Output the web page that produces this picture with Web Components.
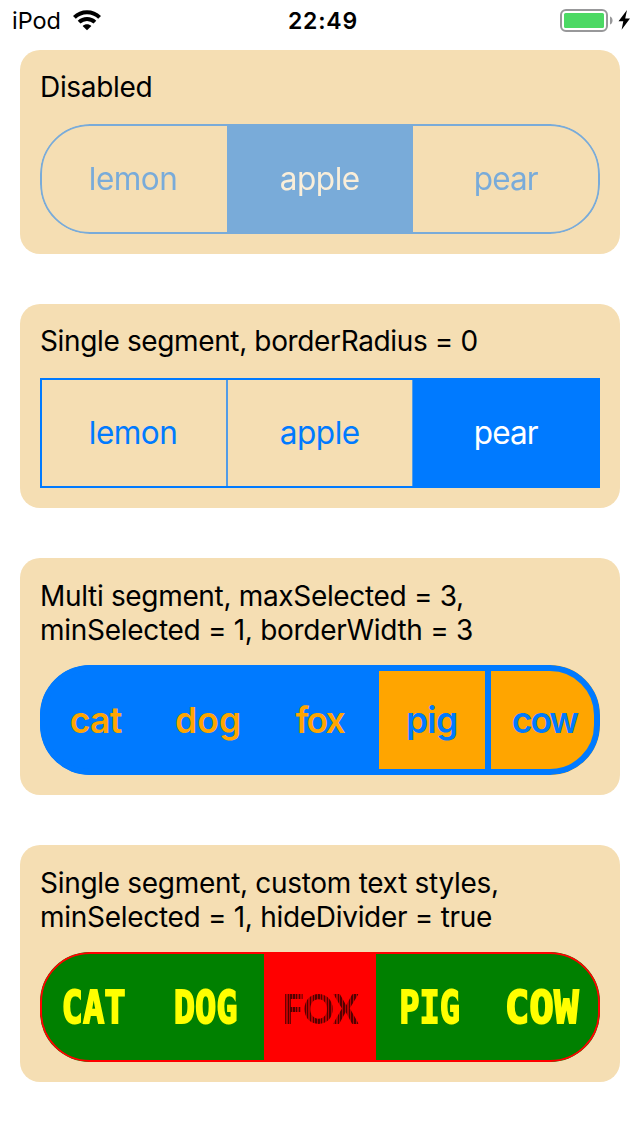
<!DOCTYPE html>
<html lang="en">
<head>
<meta charset="utf-8">
<title>Segmented controls</title>
<style>
html,body{margin:0;background:#fff}
body{width:640px;height:1136px;overflow:hidden;font-family:Inter,"Liberation Sans",sans-serif;color:#000}
</style>
</head>
<body>
<demo-screen></demo-screen>
<script>
const define = (name, html, ready) => customElements.define(name, class extends HTMLElement {
  constructor() {
    super();
    const t = document.createElement('template');
    t.innerHTML = html;
    this.attachShadow({mode: 'open'}).append(t.content.cloneNode(true));
  }
  connectedCallback() { if (ready) ready.call(this); }
});

// Text run whose glyphs span a given width, by tracking or by horizontal scale.
define('fit-text', `<style>
:host{display:block;white-space:nowrap;width:max-content}
span{display:block}
:host([striped]) span{color:transparent;background:repeating-linear-gradient(90deg,rgba(40,0,0,.8) 0 1.5px,rgba(170,0,0,.8) 1.5px 3px);-webkit-background-clip:text;background-clip:text}
</style><span><slot></slot></span>`, function () {
  const text = this.textContent, target = +this.getAttribute('span');
  if (!target) return;
  const cs = getComputedStyle(this), ctx = document.createElement('canvas').getContext('2d');
  ctx.font = `${cs.fontWeight} ${cs.fontSize} ${cs.fontFamily}`;
  const m = ctx.measureText(text), ink = m.actualBoundingBoxRight + m.actualBoundingBoxLeft;
  if (this.hasAttribute('scale')) {
    this.style.transform = `scaleX(${target / ink})`;
  } else {
    const ls = (target - ink) / (text.length - 1);
    this.style.letterSpacing = ls + 'px';
    this.style.marginRight = -ls + 'px';
  }
});

define('status-bar', `<style>
:host{display:grid;grid-template-columns:1fr auto 1fr;align-items:center;height:40px;padding:0 10px 0 13px;font-size:23.5px;line-height:40px}
.l,.r{display:flex;align-items:center}
.l{gap:11px}.r{justify-content:flex-end}
b{font-weight:600;font-size:23px;padding-left:2px}
b,.l fit-text{padding-top:2px;line-height:38px}
.l fit-text{margin-left:-1px}
svg{display:block}
</style>
<div class="l"><fit-text span="46.5">iPod</fit-text>
<svg width="30" height="22" viewBox="0 0 30 22"><g fill="none" stroke="#000" stroke-width="4"><path d="M2.4 8.4C9.5 1.5 20.5 1.5 27.6 8.4"/><path d="M7.1 13.1C11.6 8.8 18.4 8.8 22.9 13.1"/></g><path d="M15 21.3L10.6 17C13 14.8 17 14.8 19.4 17Z"/></svg></div>
<b><fit-text span="67.5">22:49</fit-text></b>
<div class="r"><svg width="72" height="26" viewBox="0 0 72 26"><rect x="3" y="3" width="46" height="21" rx="5" fill="none" stroke="#98989a" stroke-width="2"/><rect x="6" y="6" width="40" height="15" rx="1.5" fill="#4cd964"/><path d="M52 9.5c3.4 1 3.4 7 0 8z" fill="#98989a"/><path d="M69 3L60.5 14.3H65.3L63.6 22.7L72 11.4H67.2Z"/></svg></div>`);

define('demo-card', `<style>
:host{display:flex;flex-direction:column;gap:20px;padding:20px;background:#f5deb3;border-radius:20px}
.t{box-sizing:border-box;font-size:28px;line-height:34px;height:var(--title-height,34px);padding-top:var(--title-top,0px)}
</style><div class="t"><slot name="title"></slot></div><slot></slot>`);

define('segment-item', `<style>
:host{display:flex;align-items:center;justify-content:center;min-width:0;box-sizing:border-box;color:var(--tint);background:var(--off,transparent);padding-bottom:var(--lift,2px)}
:host([on]){background:var(--on,var(--tint));color:var(--on-text,#fff)}
</style><slot></slot>`);

define('segment-control', `<style>
:host{--tint:#007aff;display:grid;grid-auto-flow:column;grid-auto-columns:minmax(0,1fr);height:110px;position:relative;overflow:hidden;border-radius:var(--r,50px);font-size:31.5px}
:host([disabled]){opacity:.5}
:host::after{content:"";position:absolute;inset:0;border:var(--bw,2px) solid var(--edge,var(--tint));border-radius:inherit;pointer-events:none}
::slotted(segment-item[bar]){border-right:var(--half,1px) solid var(--bar,var(--tint))}
::slotted(segment-item[bar-left]){border-left:var(--half,1px) solid var(--bar,var(--tint))}
</style><slot></slot>`);

define('demo-screen', `<style>
:host{display:block}
main{display:flex;flex-direction:column;gap:50px;padding:10px 20px 0}
.two{--title-height:67px;--title-top:.5px}
.square{--r:0px;--bar:#529be6}
.multi{--lift:0px;--bw:6px;--half:3px;--off:#007aff;--on:orange;--on-text:#007aff;font-size:35.5px;font-weight:600}
.multi segment-item:not([on]){color:orange}
.multi [bar]:not([on]) fit-text{padding-left:4px}
.fancy{--lift:0px;--edge:red;--off:green;--on:red;font:700 45px "DejaVu Sans Mono",monospace}
.fancy segment-item:not([on]){color:#ff0;-webkit-text-stroke:1.8px #ff0;padding-right:4px}
.fancy [on]{font:900 41px Lato,sans-serif}
.fancy [on] fit-text{padding-top:3px}
.nudge{padding-right:1px}
</style>
<status-bar></status-bar>
<main>
<demo-card><fit-text slot="title" span="108.5">Disabled</fit-text>
<segment-control disabled><segment-item><fit-text span="85.5">lemon</fit-text></segment-item><segment-item on><fit-text span="78">apple</fit-text></segment-item><segment-item class="nudge"><fit-text span="63">pear</fit-text></segment-item></segment-control></demo-card>
<demo-card><fit-text slot="title" span="435.5">Single segment, borderRadius = 0</fit-text>
<segment-control class="square"><segment-item bar><fit-text span="85.5" style="padding-left:1px">lemon</fit-text></segment-item><segment-item bar bar-left><fit-text span="78">apple</fit-text></segment-item><segment-item on class="nudge"><fit-text span="63">pear</fit-text></segment-item></segment-control></demo-card>
<demo-card class="two"><fit-text slot="title" span="420">Multi segment, maxSelected = 3,</fit-text><fit-text slot="title" span="430">minSelected = 1, borderWidth = 3</fit-text>
<segment-control class="multi"><segment-item><fit-text span="51">cat</fit-text></segment-item><segment-item><fit-text span="63">dog</fit-text></segment-item><segment-item bar><fit-text span="50">fox</fit-text></segment-item><segment-item on bar bar-left><fit-text span="48">pig</fit-text></segment-item><segment-item on bar-left><fit-text span="66.5">cow</fit-text></segment-item></segment-control></demo-card>
<demo-card class="two"><fit-text slot="title" span="456">Single segment, custom text styles,</fit-text><fit-text slot="title" span="449">minSelected = 1, hideDivider = true</fit-text>
<segment-control class="fancy"><segment-item><fit-text scale span="61">CAT</fit-text></segment-item><segment-item><fit-text scale span="60">DOG</fit-text></segment-item><segment-item on><fit-text striped scale span="74">FOX</fit-text></segment-item><segment-item><fit-text scale span="57">PIG</fit-text></segment-item><segment-item><fit-text scale span="72">COW</fit-text></segment-item></segment-control></demo-card>
</main>`);
</script>
</body>
</html>
